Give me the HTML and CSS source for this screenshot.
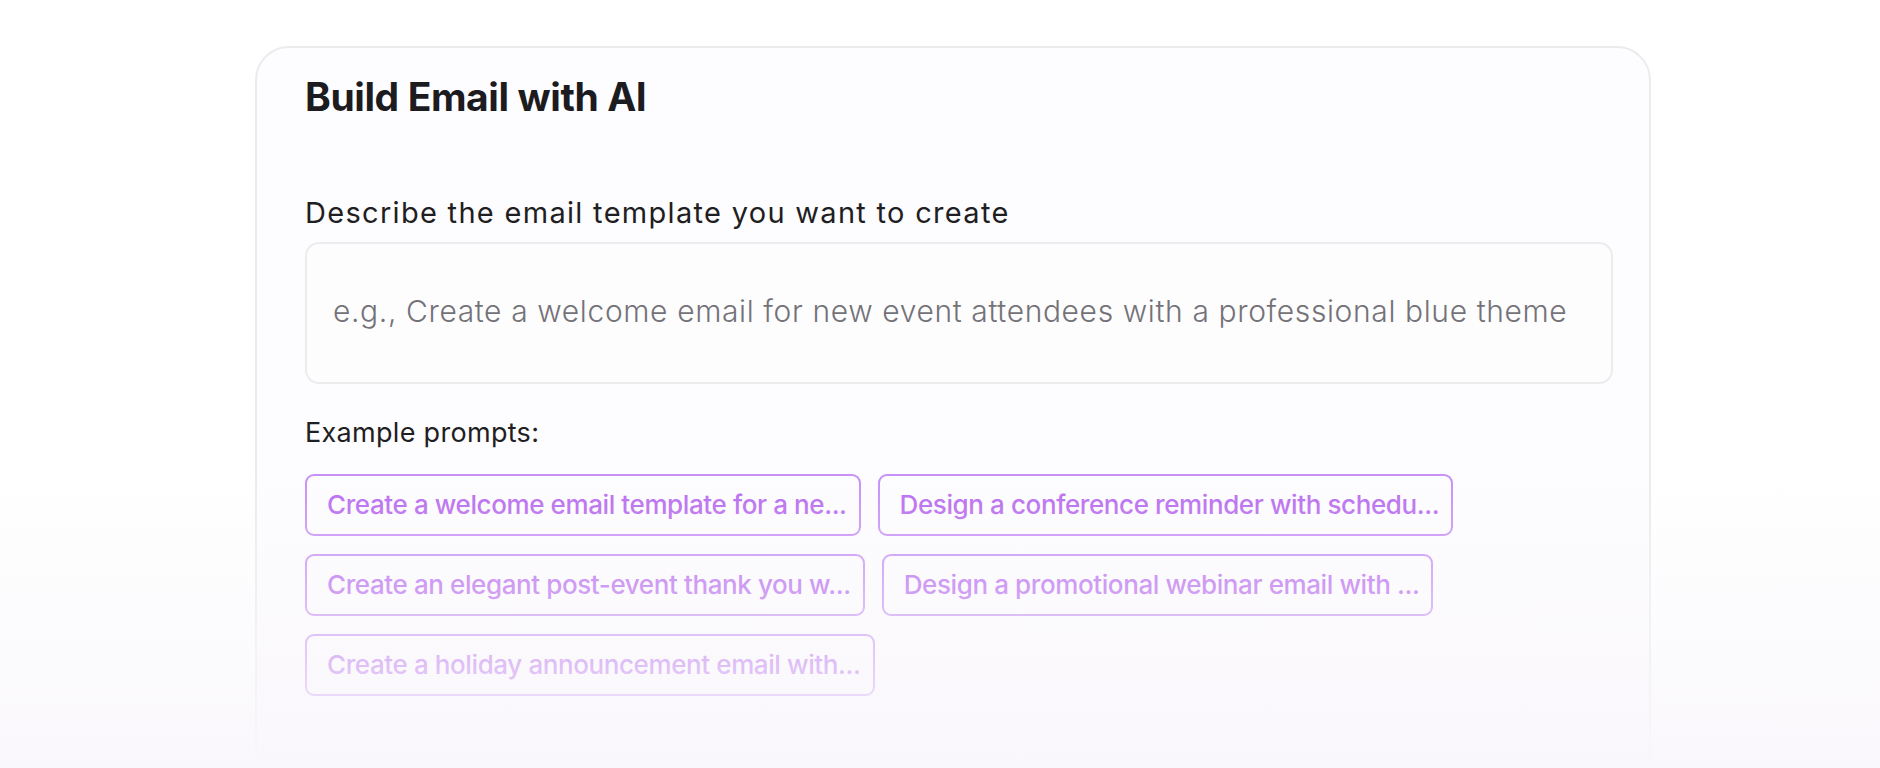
FILE: index.html
```html
<!DOCTYPE html>
<html lang="en">
<head>
<meta charset="utf-8">
<title>Build Email with AI</title>
<link rel="stylesheet" href="styles.css">
</head>
<body>
<main class="page">
  <section class="card">
    <h1 class="title">Build Email with AI</h1>
    <label class="label" for="prompt">Describe the email template you want to create</label>
    <div class="input" id="prompt">
      <span class="placeholder">e.g., Create a welcome email for new event attendees with a professional blue theme</span>
    </div>
    <p class="examples-label">Example prompts:</p>
    <div class="chips">
      <button class="chip">Create a welcome email template for a ne...</button>
      <button class="chip">Design a conference reminder with schedu...</button>
      <button class="chip">Create an elegant post-event thank you w...</button>
      <button class="chip">Design a promotional webinar email with ...</button>
      <button class="chip">Create a holiday announcement email with...</button>
    </div>
  </section>
</main>
<div class="fade"></div>
</body>
</html>
```
FILE: styles.css
```css
* { box-sizing: border-box; }
html, body { margin: 0; padding: 0; }
body {
  background: #ffffff;
  font-family: Inter, "Noto Sans", sans-serif;
  height: 768px;
  overflow: hidden;
}
.page {
  padding: 46px 0 0 255px;
}
.card {
  width: 1396px;
  height: 900px;
  background: #fdfcfe;
  border: 2px solid #ebebee;
  border-radius: 34px;
  padding: 26px 40px 0 48px;
}
.title {
  margin: 0;
  font-size: 39px;
  line-height: 1.2;
  font-weight: 700;
  color: #1c1b1f;
  letter-spacing: -0.4px;
}
.label {
  display: block;
  margin-top: 73px;
  font-size: 29px;
  line-height: 1.3;
  font-weight: 400;
  color: #1f1e22;
  letter-spacing: 1.3px;
}
.input {
  margin-top: 11px;
  width: 1308px;
  height: 142px;
  border: 2px solid #ececee;
  border-radius: 14px;
  background: #fdfdfe;
  display: flex;
  align-items: center;
  padding: 0 26px 5px;
}
.placeholder {
  font-size: 30px;
  font-weight: 300;
  color: #747278;
  white-space: nowrap;
  letter-spacing: 0.62px;
}
.examples-label {
  margin: 31px 0 0;
  font-size: 27px;
  line-height: 1.3;
  color: #1f1e22;
  letter-spacing: 0.3px;
}
.chips {
  margin-top: 23px;
  display: flex;
  flex-wrap: wrap;
  gap: 18px 17px;
  width: 1200px;
}
.chip {
  height: 62px;
  padding: 0 12px 0 20px;
  border: 2px solid #c68ff7;
  border-radius: 9px;
  background: transparent;
  font-family: Inter, "Noto Sans", sans-serif;
  font-size: 26px;
  font-weight: 500;
  color: #b86aef;
  white-space: nowrap;
  letter-spacing: -0.4px;
  cursor: pointer;
}
.fade {
  position: absolute;
  left: 0;
  right: 0;
  top: 470px;
  height: 298px;
  background: linear-gradient(to bottom, rgba(249, 247, 251, 0) 0%, rgba(249, 247, 251, 0.6) 65%, rgba(249, 247, 251, 0.98) 100%);
  pointer-events: none;
}
```
